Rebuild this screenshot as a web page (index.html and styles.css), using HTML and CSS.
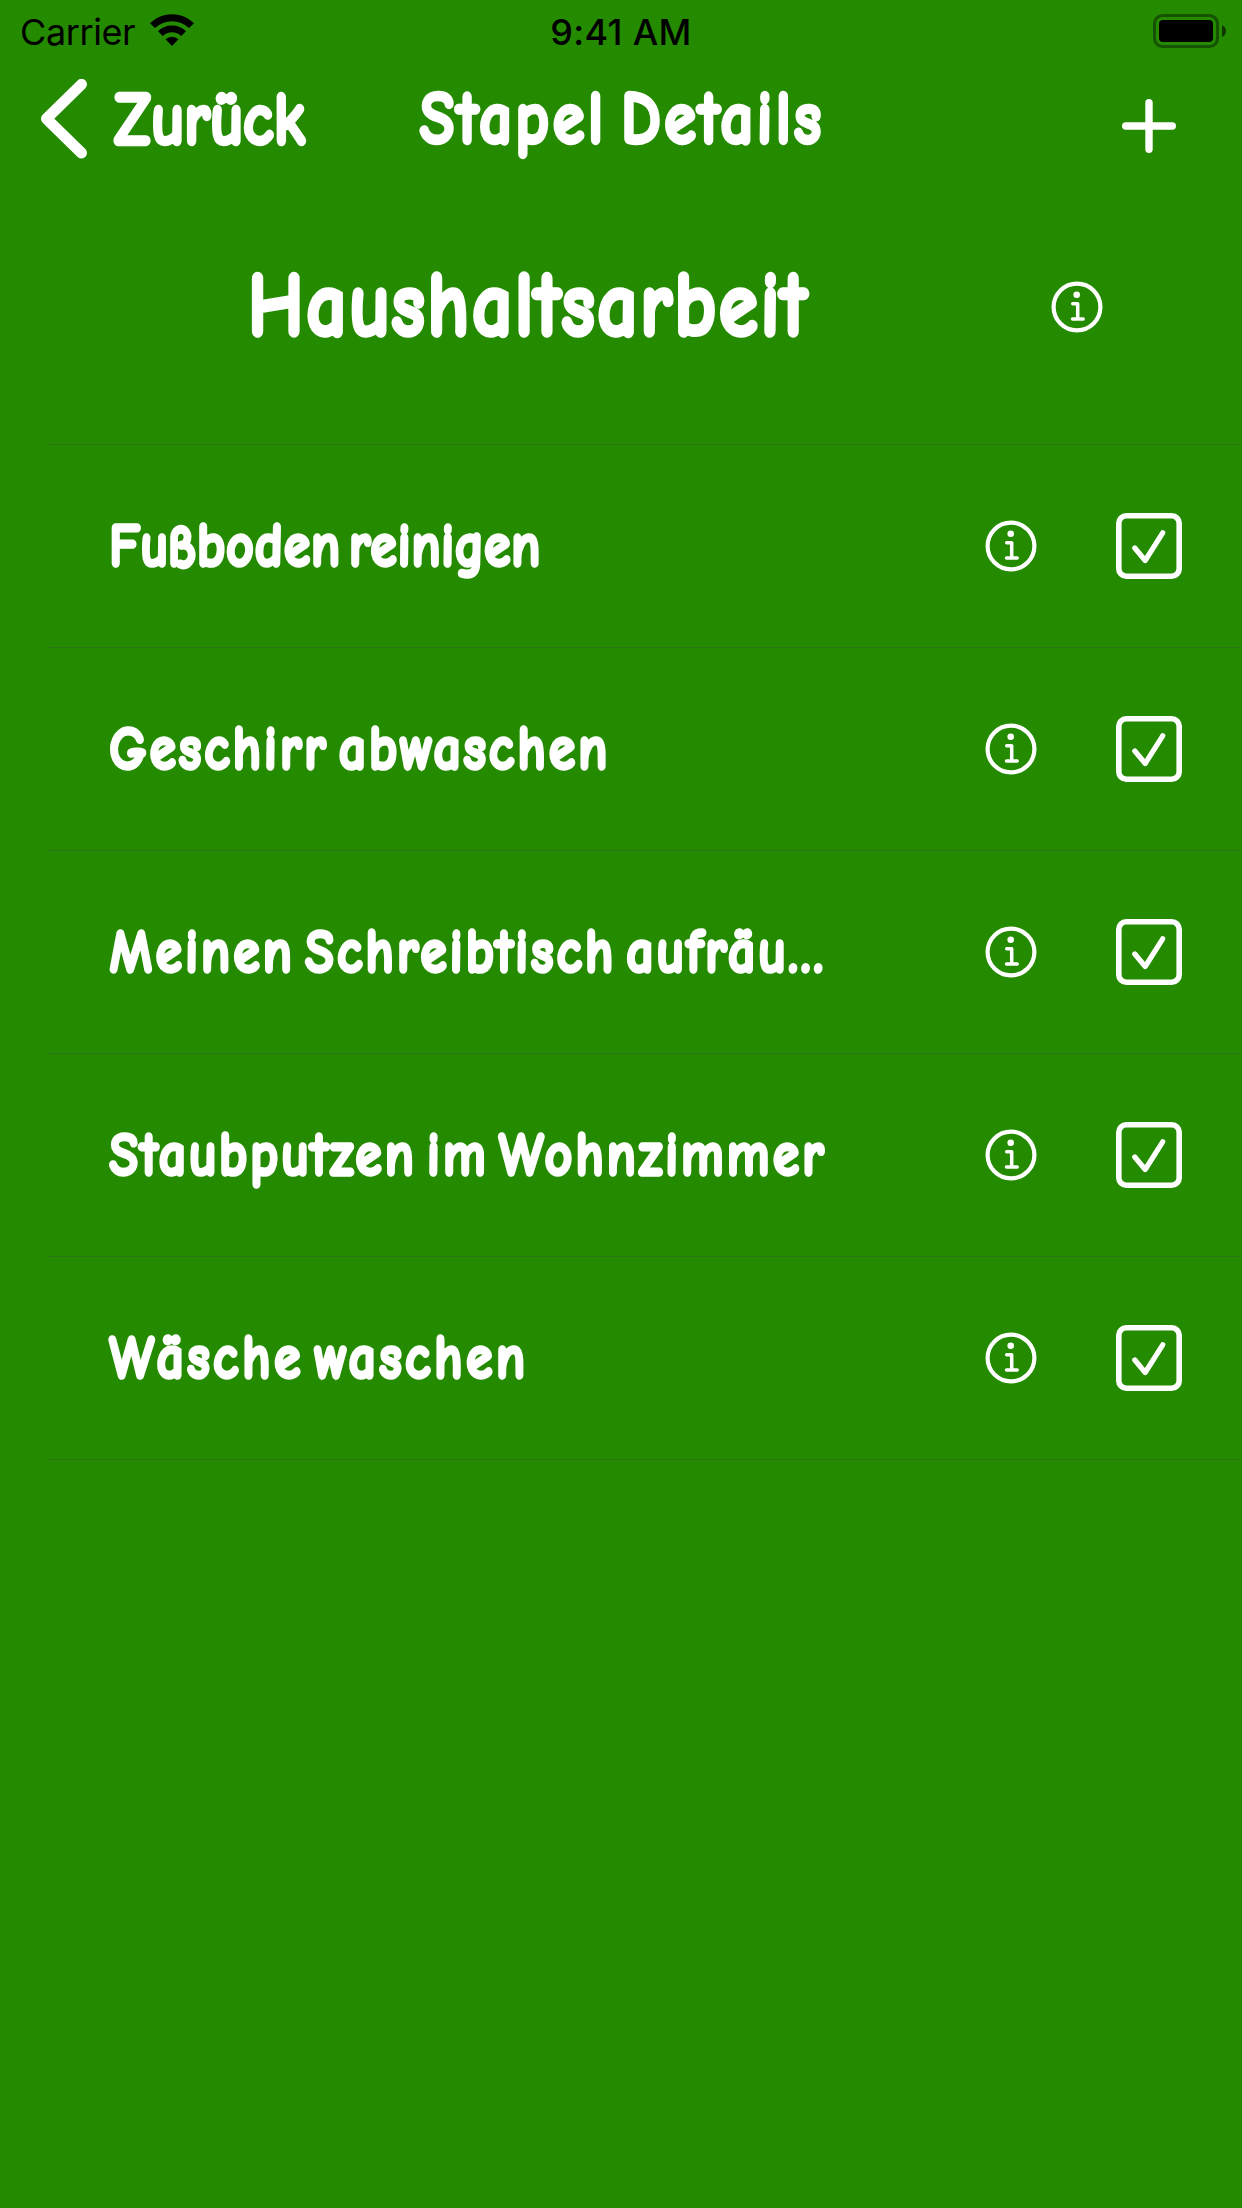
FILE: index.html
```
<!DOCTYPE html>
<html lang="de">
<head>
<meta charset="utf-8">
<title>Stapel Details</title>
<link rel="stylesheet" href="styles.css">
</head>
<body>
<svg class="symbols" aria-hidden="true">
  <symbol id="info" viewBox="0 0 52 52">
    <circle cx="26" cy="26" r="23.4" fill="none" stroke="#fff" stroke-width="4.2"/>
    <circle cx="25.7" cy="13.8" r="3.3" fill="#fff"/>
    <path d="M21.7 22.8H26.7V38M21.5 38.1H32.2" fill="none" stroke="#fff" stroke-width="3.5" stroke-linecap="round" stroke-linejoin="round"/>
  </symbol>
  <symbol id="check" viewBox="0 0 66 66">
    <rect x="2.8" y="2.8" width="60.4" height="60.4" rx="7.5" fill="none" stroke="#fff" stroke-width="5.6"/>
    <path d="M18.8 35L29.2 47.5L46.7 19.8" fill="none" stroke="#fff" stroke-width="5.2" stroke-linecap="round" stroke-linejoin="round"/>
  </symbol>
</svg>
<div class="status">
  <div class="carrier"><span>Carrier</span>
    <svg class="wifi" viewBox="0 0 46 34"><path d="M1 10.2A31.5 31.5 0 0 1 45 10.2L40 15A24.5 24.5 0 0 0 6 15ZM9 18.2A20 20 0 0 1 37 18.2L32.2 23A13.3 13.3 0 0 0 13.8 23ZM16.5 26.2A9.5 9.5 0 0 1 29.5 26.2L23 33Z"/></svg>
  </div>
  <div class="time">9:41 AM</div>
  <svg class="battery" viewBox="0 0 74 34"><rect x="1.5" y="1.5" width="63" height="31" rx="8" fill="none" stroke="#000" stroke-opacity=".4" stroke-width="3"/><rect x="6" y="6" width="54" height="22" rx="4"/><path d="M69 11Q73 13 73 17T69 23Z" fill-opacity=".6"/></svg>
</div>
<nav class="nav">
  <div class="back"><svg class="chevron" viewBox="0 0 46 80"><path d="M40.5 5.3L5.5 39.7L40.5 74" fill="none" stroke="#fff" stroke-width="11" stroke-linecap="round" stroke-linejoin="round"/></svg><span class="marker back-label">Zurück</span></div>
  <div class="marker title">Stapel Details</div>
  <svg class="plus" viewBox="0 0 54 54"><path d="M27 3.7V50.3M3.7 27H50.3" stroke="#fff" stroke-width="7.4" stroke-linecap="round"/></svg>
</nav>
<header class="deck"><h1 class="marker deck-name">Haushaltsarbeit</h1><svg class="info"><use href="#info"/></svg></header>
<ul class="list">
  <li class="row"><span class="marker label tight">Fußboden reinigen</span><svg class="info"><use href="#info"/></svg><svg class="check"><use href="#check"/></svg></li>
  <li class="row"><span class="marker label">Geschirr abwaschen</span><svg class="info"><use href="#info"/></svg><svg class="check"><use href="#check"/></svg></li>
  <li class="row"><span class="marker label">Meinen Schreibtisch aufräu…</span><svg class="info"><use href="#info"/></svg><svg class="check"><use href="#check"/></svg></li>
  <li class="row"><span class="marker label">Staubputzen im Wohnzimmer</span><svg class="info"><use href="#info"/></svg><svg class="check"><use href="#check"/></svg></li>
  <li class="row"><span class="marker label loose">Wäsche waschen</span><svg class="info"><use href="#info"/></svg><svg class="check"><use href="#check"/></svg></li>
</ul>
</body>
</html>
```
FILE: styles.css
```
* { box-sizing: border-box; }
body { margin: 0; min-height: 2208px; background: #248a00; color: #fff; }
.symbols { position: absolute; width: 0; height: 0; }

.status {
  display: grid;
  grid-template-columns: 1fr auto 1fr;
  align-items: center;
  height: 60px;
  padding: 0 20px;
  color: #000;
  font: 400 36px/60px Inter, sans-serif;
}
.carrier { display: flex; align-items: center; gap: 14px; padding-top: 2px; letter-spacing: -.4px; }
.wifi { width: 46px; height: 34px; margin-top: -4px; }
.time { padding-top: 2px; font-weight: 500; letter-spacing: .3px; }
.battery { width: 74px; height: 34px; justify-self: end; margin-right: -5px; }

.marker {
  font-family: "Marker Felt", "Comic Neue", cursive;
  font-weight: 400;
  white-space: nowrap;
  word-spacing: -13px;
  transform: scaleX(.86);
  transform-origin: 0 50%;
  -webkit-text-stroke: 5.6px #fff;
}
.nav {
  display: grid;
  grid-template-columns: 1fr auto 1fr;
  align-items: center;
  height: 118px;
  padding: 0 41px;
  font-size: 70px;
  line-height: 115px;
}
.back { display: flex; align-items: center; gap: 28px; width: 0; }
.chevron { width: 46px; height: 80px; flex: none; }
.back-label { padding-top: 2px; letter-spacing: 2.4px; -webkit-text-stroke-width: 6.4px; }
.title { padding: 1px 0 0 6px; letter-spacing: 6.2px; transform-origin: 50% 50%; -webkit-text-stroke-width: 6.4px; }
.plus { width: 54px; height: 54px; justify-self: end; margin: 13px 25px 0 0; }

.deck { display: flex; align-items: center; height: 266px; padding: 0 139px 9px 249px; }
.deck-name { flex: 1; margin: 0; font-size: 86px; line-height: 100px; letter-spacing: 5.6px; -webkit-text-stroke-width: 7.5px; }
.info { width: 52px; height: 52px; flex: none; }

.list { list-style: none; margin: 0 0 0 48px; padding: 0; border-top: 1px solid #297616; }
.row { display: flex; align-items: center; height: 203px; padding: 0 60px 0 62px; border-bottom: 1px solid #297616; }
.label { flex: 1; font-size: 58px; letter-spacing: 5.3px; }
.tight { letter-spacing: 2.8px; }
.loose { letter-spacing: 5.9px; }
.check { width: 66px; height: 66px; margin-left: 79px; flex: none; }
```
